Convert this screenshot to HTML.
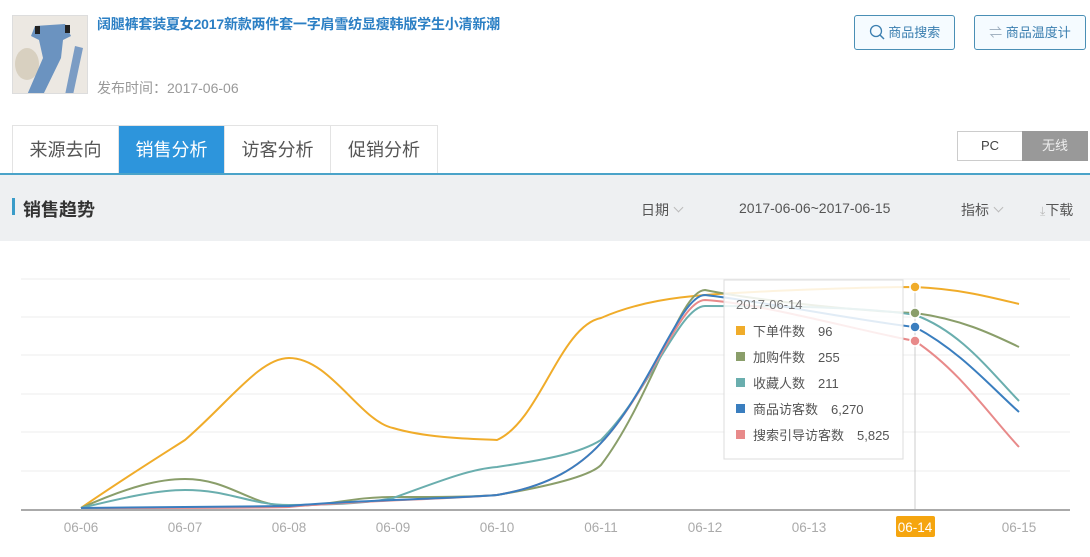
<!DOCTYPE html>
<html><head><meta charset="utf-8"><style>
*{margin:0;padding:0;box-sizing:border-box}
body{width:1090px;height:557px;background:#fff;font-family:"Liberation Sans","Noto Sans CJK SC",sans-serif;position:relative;overflow:hidden;color:#333}
.abs{position:absolute}
.thumb{left:12px;top:15px;width:76px;height:79px;background:#e9e6e0;border:1px solid #ddd;overflow:hidden}
.title{left:97px;top:14px;font-size:14px;font-weight:bold;color:#2b7fc4;letter-spacing:-0.2px}
.date{left:97px;top:78px;font-size:14px;color:#999}
.btn{top:15px;height:35px;border:1px solid #4a8fb5;border-radius:3px;background:#f5fbff;color:#3b7fb0;font-size:13px;line-height:33px;text-align:center}
.tabs{left:12px;top:125px;height:48px;display:flex;border:1px solid #e3e3e3;border-bottom:none}
.tab{width:106px;text-align:center;font-size:18px;line-height:48px;color:#555;border-right:1px solid #e3e3e3}
.tab.on{background:#2d95dc;color:#fff}
.line{left:0;top:173px;width:1090px;height:2px;background:#4aa3c9}
.bar{left:0;top:175px;width:1090px;height:66px;background:#eef0f2}
.seg{top:131px;height:30px;border:1px solid #ccc;font-size:13px;line-height:28px;text-align:center}
.chev{display:inline-block;width:7px;height:7px;border-right:1px solid #bbb;border-bottom:1px solid #bbb;transform:rotate(45deg);margin-left:6px;position:relative;top:-4px}
</style></head><body>
<div class="abs thumb"><svg width="76" height="79"><rect width="76" height="79" fill="#ece8e2"/><ellipse cx="14" cy="48" rx="12" ry="16" fill="#d8d0c0"/><path d="M22 10 L52 8 L58 20 L50 24 L48 42 L30 79 L14 79 L30 42 L26 24 L18 20Z" fill="#6b93c0"/><path d="M62 30 L70 32 L60 79 L52 79Z" fill="#7b9cc4"/><rect x="22" y="10" width="5" height="8" fill="#222"/><rect x="52" y="9" width="5" height="8" fill="#222"/></svg></div>
<div class="abs title">阔腿裤套装夏女2017新款两件套一字肩雪纺显瘦韩版学生小清新潮</div>
<div class="abs date">发布时间：2017-06-06</div>
<div class="abs btn" style="left:854px;width:101px"><svg width="16" height="16" style="vertical-align:-3px"><circle cx="7" cy="7" r="5.5" fill="none" stroke="#3b7fb0" stroke-width="1.3"/><line x1="11" y1="11" x2="15" y2="15" stroke="#3b7fb0" stroke-width="1.5"/></svg> 商品搜索</div>
<div class="abs btn" style="left:974px;width:112px"><span style="color:#9ab">⇌</span> 商品温度计</div>
<div class="abs tabs"><div class="tab">来源去向</div><div class="tab on">销售分析</div><div class="tab">访客分析</div><div class="tab" style="border-right:none">促销分析</div></div>
<div class="abs seg" style="left:957px;width:66px;background:#fff;color:#444">PC</div>
<div class="abs seg" style="left:1022px;width:66px;background:#999;color:#eee;border-color:#999">无线</div>
<div class="abs line"></div>
<div class="abs bar"></div>
<div class="abs" style="left:12px;top:198px;width:3px;height:17px;background:#3a9cc9"></div>
<div class="abs" style="left:23px;top:196px;font-size:18px;font-weight:bold;color:#333">销售趋势</div>
<div class="abs" style="left:641px;top:200px;font-size:14px;color:#555">日期<span class="chev"></span></div>
<div class="abs" style="left:739px;top:200px;font-size:14px;color:#555">2017-06-06~2017-06-15</div>
<div class="abs" style="left:961px;top:200px;font-size:14px;color:#555">指标<span class="chev"></span></div>
<div class="abs" style="left:1040px;top:200px;font-size:14px;color:#555"><span style="color:#bbb;font-size:12px">⤓</span>下载</div>
<svg class="abs" style="left:0;top:241px" width="1090" height="316">
<g stroke="#ececec" stroke-width="1">
<line x1="21" y1="38" x2="1070" y2="38"/><line x1="21" y1="76" x2="1070" y2="76"/><line x1="21" y1="114" x2="1070" y2="114"/><line x1="21" y1="153" x2="1070" y2="153"/><line x1="21" y1="191" x2="1070" y2="191"/><line x1="21" y1="230" x2="1070" y2="230"/></g>
<line x1="915" y1="40" x2="915" y2="268" stroke="#ccc"/>
<line x1="21" y1="269" x2="1070" y2="269" stroke="#aaa" stroke-width="2"/>
<g fill="none" stroke-width="2">
<path stroke="#f0ac2a" d="M81 267 C120 240 160 215 185 199 C230 160 260 117 289 117 C330 117 360 180 393 187 C430 198 480 198 497 199 C540 180 560 85 601 77 C640 60 680 56 705 54 C760 50 860 46 915 46 C960 48 990 56 1019 63"/>
<path stroke="#8a9e6a" d="M81 267 C130 245 160 238 185 238 C230 238 250 265 289 265 C330 265 350 256 393 256 C440 256 470 256 497 254 C550 245 590 235 601 224 C650 160 680 49 705 49 C760 60 860 70 915 72 C960 78 990 92 1019 106"/>
<path stroke="#6aaeae" d="M81 267 C130 255 160 249 185 249 C230 249 250 264 289 264 C330 264 370 262 393 257 C440 240 470 228 497 226 C550 218 580 212 601 199 C650 150 680 65 705 65 C760 65 860 65 915 74 C960 90 990 130 1019 160"/>
<path stroke="#e88a8a" d="M81 267 C200 267 250 267 289 266 C350 260 450 258 497 254 C550 245 580 225 601 202 C650 150 680 59 705 59 C760 62 860 90 915 100 C960 130 990 175 1019 206"/>
<path stroke="#3a7ebf" d="M81 267 C200 266 250 266 289 265 C350 259 450 258 497 254 C550 245 580 225 601 202 C650 150 680 54 705 54 C760 60 860 80 915 86 C960 110 990 145 1019 171"/>
</g>
<rect x="724" y="39" width="179" height="179" fill="rgba(255,255,255,0.85)" stroke="#ddd"/>
<circle cx="915" cy="46" r="5" fill="#f0ac2a" stroke="#fff" stroke-width="1.5"/>
<circle cx="915" cy="72" r="5" fill="#8a9e6a" stroke="#fff" stroke-width="1.5"/>
<circle cx="915" cy="86" r="5" fill="#3a7ebf" stroke="#fff" stroke-width="1.5"/>
<circle cx="915" cy="100" r="5" fill="#e88a8a" stroke="#fff" stroke-width="1.5"/>
<g font-family="Liberation Sans,Noto Sans CJK SC,sans-serif" font-size="13" fill="#555">
<text x="736" y="68" fill="#777">2017-06-14</text>
<rect x="736" y="85" width="9" height="9" fill="#f0ac2a"/><text x="753" y="95">下单件数　96</text>
<rect x="736" y="111" width="9" height="9" fill="#8a9e6a"/><text x="753" y="121">加购件数　255</text>
<rect x="736" y="137" width="9" height="9" fill="#6aaeae"/><text x="753" y="147">收藏人数　211</text>
<rect x="736" y="163" width="9" height="9" fill="#3a7ebf"/><text x="753" y="173">商品访客数　6,270</text>
<rect x="736" y="189" width="9" height="9" fill="#e88a8a"/><text x="753" y="199">搜索引导访客数　5,825</text>
</g>
<rect x="896" y="275" width="39" height="21" rx="2" fill="#f5a50f"/>
<g font-family="Liberation Sans,sans-serif" font-size="13.5" fill="#aaa" text-anchor="middle">
<text x="81" y="291">06-06</text><text x="185" y="291">06-07</text><text x="289" y="291">06-08</text><text x="393" y="291">06-09</text><text x="497" y="291">06-10</text><text x="601" y="291">06-11</text><text x="705" y="291">06-12</text><text x="809" y="291">06-13</text><text x="915" y="291" fill="#fff">06-14</text><text x="1019" y="291">06-15</text></g>
</svg>
</body></html>
